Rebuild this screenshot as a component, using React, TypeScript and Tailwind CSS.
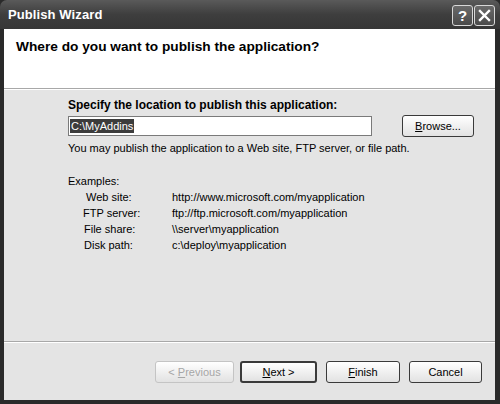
import React from "react";

const F = { fontFamily: "'Liberation Sans', Arial, sans-serif" };

function Btn({ children, cls = "", disabled = false }: { children: React.ReactNode; cls?: string; disabled?: boolean }) {
  return (
    <div
      className={
        "h-[22px] flex items-center justify-center rounded-[3px] text-[11px] bg-gradient-to-b from-[#ffffff] to-[#e2e2e2] whitespace-nowrap " +
        (disabled ? "border border-[#c4c4c4] text-[#a6a6a6] " : "border border-[#3a3a3a] text-black ") +
        cls
      }
    >
      {children}
    </div>
  );
}

export default function App() {
  return (
    <div className="w-[500px] h-[404px] bg-[#2a2a2a] flex flex-col text-black" style={F}>
      {/* title bar */}
      <div className="h-[29px] rounded-t-[7px] bg-gradient-to-b from-[#5a5a5a] via-[#3e3e3e] to-[#363636] flex items-center pl-[8px] pr-[5px] shrink-0">
        <span className="text-white font-bold text-[13px] tracking-[0.1px]">Publish Wizard</span>
        <div className="ml-auto flex gap-[1px] mt-[1px]">
          <div className="w-[21px] h-[21px] rounded-[3px] border border-[#d8d8d8] bg-gradient-to-b from-[#6a6a6a] to-[#4a4a4a] flex items-center justify-center text-white font-bold text-[15px] leading-none">?</div>
          <div className="w-[21px] h-[21px] rounded-[3px] border border-[#d8d8d8] bg-gradient-to-b from-[#6a6a6a] to-[#4a4a4a] flex items-center justify-center">
            <svg width="13" height="13" viewBox="0 0 13 13">
              <path d="M2 2 L11 11 M11 2 L2 11" stroke="white" strokeWidth="2.4" strokeLinecap="square" />
            </svg>
          </div>
        </div>
      </div>
      {/* client area */}
      <div className="flex-1 ml-[4px] mr-[5px] mb-[4px] flex flex-col bg-[#e4e4e4]">
        <div className="h-[60px] bg-white border-b border-[#a8a8a8] pl-[12px] pt-[8px] shrink-0">
          <div className="font-bold text-[13.7px]">Where do you want to publish the application?</div>
        </div>
        <div className="h-[1px] bg-white shrink-0" />
        <div className="h-[252px] border-b border-[#a8a8a8] pl-[64px] pt-[7px] text-[11px] shrink-0">
          <div className="font-bold text-[12px] leading-[16px]">Specify the location to publish this application:</div>
          <div className="flex items-center mt-[2px]">
            <div className="w-[304px] h-[20px] bg-white border border-[#7a7a7a] flex items-center pl-[1px]">
              <span className="bg-[#3c3c3c] text-white leading-[14px] px-[1px]">C:\MyAddins</span>
            </div>
            <Btn cls="w-[72px] ml-[30px]"><span><u>B</u>rowse...</span></Btn>
          </div>
          <div className="mt-[3px] leading-[16px]">You may publish the application to a Web site, FTP server, or file path.</div>
          <div className="mt-[17px] leading-[16px]">Examples:</div>
          <div className="grid grid-cols-[104px_1fr] leading-[16px]">
            <div className="pl-[18px]">Web site:</div>
            <div>http://www.microsoft.com/myapplication</div>
            <div className="pl-[15px]">FTP server:</div>
            <div>ftp://ftp.microsoft.com/myapplication</div>
            <div className="pl-[16px]">File share:</div>
            <div>\\server\myapplication</div>
            <div className="pl-[16px]">Disk path:</div>
            <div>c:\deploy\myapplication</div>
          </div>
        </div>
        <div className="h-[1px] bg-white shrink-0" />
        <div className="flex-1 flex items-start pt-[18px] pl-[151px]">
          <Btn disabled cls="w-[79px]"><span>&lt; <u>P</u>revious</span></Btn>
          <Btn cls="w-[77px] ml-[6px] border-2"><span><u>N</u>ext &gt;</span></Btn>
          <Btn cls="w-[74px] ml-[9px]"><span><u>F</u>inish</span></Btn>
          <Btn cls="w-[73px] ml-[9px]"><span>Cancel</span></Btn>
        </div>
      </div>
    </div>
  );
}
